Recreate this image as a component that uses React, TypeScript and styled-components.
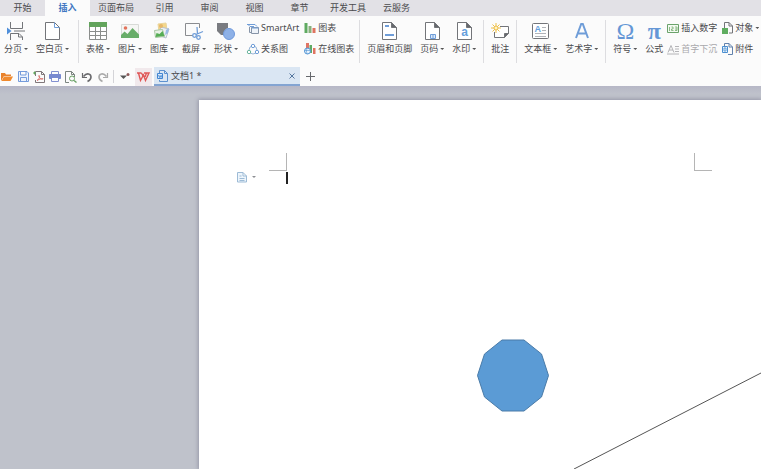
import React from "react";
import styled, { createGlobalStyle } from "styled-components";

const GlobalStyle = createGlobalStyle`
  *, *::before, *::after { box-sizing: border-box; }
  html, body, #root { height: 100%; margin: 0; }
  body {
    overflow: hidden;
    color: #4a4a4d;
    font-family: "Noto Sans", "Noto Sans CJK SC", sans-serif;
    font-size: 9px;
    line-height: 12px;
  }
  button {
    margin: 0;
    padding: 0;
    border: 0;
    background: none;
    color: inherit;
    font: inherit;
    white-space: nowrap;
    cursor: default;
  }
  svg { display: block; flex: none; overflow: visible; }
`;

const Window = styled.div`
  display: flex;
  flex-direction: column;
  min-height: 100vh;
  background: #bfc2cb;
`;

const MenuTabs = styled.nav`
  display: flex;
  height: 16px;
  background: #e2e1e6;
`;

const MenuTab = styled.button<{ $active?: boolean; $wide?: boolean }>`
  width: ${(p) => (p.$wide ? 52 : 45)}px;
  height: 16px;
  color: ${(p) => (p.$active ? "#3f77c2" : "#4a4a4d")};
  background: ${(p) => (p.$active ? "#fbfbfb" : "transparent")};
  font-weight: ${(p) => (p.$active ? 700 : 400)};
`;

const Ribbon = styled.div`
  display: flex;
  align-items: flex-start;
  height: 51px;
  padding-top: 4px;
  overflow: hidden;
  background: #fbfbfb;
`;

const Divider = styled.span<{ $tight?: boolean }>`
  flex: none;
  width: 1px;
  height: 43px;
  margin: 0 3px 0 ${(p) => (p.$tight ? 3 : 5)}px;
  background: #dddde0;
`;

const Tool = styled.button`
  display: flex;
  flex: none;
  flex-direction: column;
  align-items: center;
  gap: 1px;
  padding: 0 4px;
`;

const IconBox = styled.span`
  display: flex;
  align-items: center;
  justify-content: center;
  height: 22px;
`;

const Label = styled.span`
  display: flex;
  align-items: center;
  gap: 2px;
`;

const Caret = styled.span`
  width: 4px;
  height: 2px;
  background: #555;
  clip-path: polygon(0 0, 100% 0, 50% 100%);
`;

const SmallColumn = styled.div<{ $snug?: boolean }>`
  display: flex;
  flex: none;
  flex-direction: column;
  gap: 9px;
  margin-left: ${(p) => (p.$snug ? 0 : 5)}px;
  padding-top: 2px;
`;

const SmallTool = styled.button`
  display: flex;
  align-items: center;
  gap: 2px;
  height: 12px;
  &:disabled { color: #a9a9ac; }
`;

const DocumentBar = styled.div`
  display: flex;
  align-items: center;
  height: 19px;
  background: #fbfbfb;
`;

const QuickAccess = styled.div`
  display: flex;
  align-items: center;
  gap: 4px;
  padding: 0 4px 0 1px;
`;

const QuickButton = styled.button`
  display: flex;
  align-items: center;
  justify-content: center;
  width: 12px;
  height: 14px;
`;

const QuickDivider = styled.span`
  width: 1px;
  height: 13px;
  margin: 0 1px 0 0;
  background: #d4d4d8;
`;

const HomeButton = styled(QuickButton)`
  width: 17px;
  height: 18px;
  background: #f1e9ec;
`;

const DocumentTab = styled.div`
  display: flex;
  align-items: center;
  width: 146px;
  height: 19px;
  margin-left: 2px;
  padding: 0 2px 0 3px;
  border-bottom: 2px solid #83a4d2;
  background: #dae6f3;
`;

const DocumentName = styled.button`
  display: flex;
  flex: 1;
  align-items: center;
  gap: 3px;
`;

const AddButton = styled(QuickButton)`
  margin-left: 4px;
`;

const Workspace = styled.main`
  display: flex;
  flex: 1;
  padding: 14px 0 0 199px;
  background: linear-gradient(#b6b7c6, #bfc2cb 8px);
`;

const SheetShadow = styled.div`
  display: flex;
  flex: 1;
  box-shadow: 0 0 4px 1px #9698a8;
`;

const Sheet = styled.section`
  position: relative;
  flex: 1;
  overflow: hidden;
  background: #fff;
`;

const MarginCorner = styled.span<{ $side: "left" | "right" }>`
  position: absolute;
  top: 53px;
  left: ${(p) => (p.$side === "left" ? 70 : 495)}px;
  width: 18px;
  height: 18px;
  border: 0 solid #b5b5b5;
  border-bottom-width: 1px;
  border-left-width: ${(p) => (p.$side === "right" ? 1 : 0)}px;
  border-right-width: ${(p) => (p.$side === "left" ? 1 : 0)}px;
`;

const TextCursor = styled.span`
  position: absolute;
  top: 72px;
  left: 87px;
  width: 2px;
  height: 12px;
  background: #222;
`;

const ParagraphHandle = styled.button`
  position: absolute;
  top: 71px;
  left: 38px;
  display: flex;
  align-items: center;
  gap: 4px;
`;

const PaleCaret = styled(Caret)`
  background: #8d8f94;
`;

const CanvasShape = styled.svg<{ $x: number; $y: number }>`
  position: absolute;
  top: ${(p) => p.$y}px;
  left: ${(p) => p.$x}px;
`;

type IconProps = { w?: number; h?: number; children: React.ReactNode };
const Icon = ({ w = 18, h = 18, children }: IconProps) => (
  <svg width={w} height={h} viewBox={`0 0 ${w} ${h}`} fill="none" stroke="#737579" aria-hidden="true">
    {children}
  </svg>
);

const BLUE = "#6f9dd8";

const PageBreakIcon = () => (
  <Icon w={18} h={18}>
    <path d="M3.5 0v6.500h12V0M3.5 18v-6.500h8.500l3.500 3.500v3M11.500 11.500v3.500h4M7 9h11" />
    <path d="M0 5.500l4.500 3.500L0 12.500z" fill="#4f8fda" stroke="none" />
  </Icon>
);
const BlankPageIcon = () => (
  <Icon w={15}>
    <path d="M.5.5h9l5 5v12H.5z" fill="#fff" />
    <path d="M9.500.5v5h5" stroke={BLUE} />
  </Icon>
);
const TableIcon = () => (
  <Icon>
    <path d="M.5 5v12.500h17V5M.5 9.500h17M.5 13.500h17M6.500 5v12.500M11.500 5v12.500" fill="#fff" stroke="#8b8e8c" />
    <path d="M0 0h18v5H0z" fill="#63a45c" stroke="none" />
  </Icon>
);
const PictureIcon = () => (
  <Icon>
    <path d="M.5 2.500h17v13H.5z" fill="#f5f6f4" stroke="#d8dad7" />
    <circle cx="4.500" cy="6" r="1.800" fill="#e2735b" stroke="none" />
    <path d="M0 16v-3l3.500-3.500 3 2.500 5-6 6.500 6.500V16z" fill="#68ad69" stroke="none" />
  </Icon>
);
const GalleryIcon = () => (
  <Icon>
    <path d="M5 2l8-1 1 7-8 2z" fill="#f5d789" stroke="#ead59b" />
    <path d="M8 5l8 2-3 9-8-3z" fill="#edf0f3" stroke="#b9c3cf" />
    <circle cx="8" cy="4" r="2" fill="#e6b86b" stroke="none" />
    <path d="M1.500 8.500l8-1 2 7-9 1z" fill="#e9f2e7" stroke="#a9c7a4" />
    <path d="M2.500 15l1-4 3 1 3-3 2 5z" fill="#55ad54" stroke="none" />
    <path d="M13 8l3-2-1 5-3 2z" fill="#9cbce6" stroke="none" />
  </Icon>
);
const ScreenshotIcon = () => (
  <Icon w={19}>
    <path d="M8 13.500H.5v-12h14V6" stroke="#8a8c90" />
    <path d="M12 5l.5 7M18 9.500l-7 3" stroke={BLUE} strokeWidth="1.300" />
    <circle cx="9.500" cy="13.500" r="1.800" stroke={BLUE} strokeWidth="1.300" />
    <circle cx="13.500" cy="15.500" r="1.800" stroke={BLUE} strokeWidth="1.300" />
  </Icon>
);
const ShapesIcon = () => (
  <Icon>
    <path d="M0 1h11v5a6 6 0 0 0-4 7H4L0 9z" fill="#797b80" stroke="none" />
    <circle cx="12" cy="12" r="5.500" fill="#8eb1e7" stroke="#6f99dc" />
  </Icon>
);
const SmartArtIcon = () => (
  <Icon w={12} h={11}>
    <path d="M0 1.500h8l2 2M1 1.500l2 2h4" stroke={BLUE} />
    <path d="M2.500 4v5.500H4M4.500 4.500h7v6h-7z" fill="#eef3f9" stroke="#8795a8" />
    <path d="M4.500 5h7" stroke={BLUE} />
  </Icon>
);
const RelationIcon = () => (
  <Icon w={12} h={11}>
    <circle cx="6" cy="6" r="4" stroke="#9ab6d6" />
    <circle cx="6" cy="2" r="1.700" fill="#fff" stroke={BLUE} />
    <circle cx="2" cy="8" r="1.700" fill="#fff" stroke="#69b59d" />
    <circle cx="10" cy="8" r="1.700" fill="#fff" stroke={BLUE} />
  </Icon>
);
const ChartIcon = () => (
  <Icon w={12} h={11}>
    <path d="M.5 0h3v10h-3z" fill="#5faa61" stroke="none" />
    <path d="M4.500 3h3v7h-3z" fill="#88b07c" stroke="none" />
    <path d="M8.500 5h3v5h-3z" fill="#df7460" stroke="none" />
  </Icon>
);
const OnlineChartIcon = () => (
  <Icon w={12} h={12}>
    <path d="M2 0h3v6H2z" fill="#e07565" stroke="none" />
    <path d="M5.500 2h2.500v8H5.500z" fill="#5faa61" stroke="none" />
    <path d="M9 5h2.500v6H9z" fill="#df7460" stroke="none" />
    <circle cx="3.500" cy="8" r="3" fill="#e9f3fd" stroke="#4f93d4" />
    <path d="M1 7.500h5M3.500 5c-1.500 2-1.500 4 0 6" stroke="#4f93d4" strokeWidth=".6" />
  </Icon>
);
const FoldedPage = () => (
  <>
    <path d="M.5.5h9l5 5v12H.5z" fill="#fff" />
    <path d="M9.500.5v5h5z" fill="#66696e" />
  </>
);
const HeaderFooterIcon = () => (
  <Icon w={15}>
    <FoldedPage />
    <path d="M3 4h4M3 13h9" stroke={BLUE} strokeWidth="2" />
  </Icon>
);
const PageNumberIcon = () => (
  <Icon w={15}>
    <FoldedPage />
    <path d="M5.500 12.500h5v4h-5zM8 12.500v4" fill="#dceafb" stroke={BLUE} />
  </Icon>
);
const WatermarkIcon = () => (
  <Icon w={15}>
    <FoldedPage />
    <text x="7.500" y="14" textAnchor="middle" fontFamily="Liberation Sans" fontWeight="700" fontSize="12" fill="#659fdc" stroke="none">a</text>
  </Icon>
);
const CommentIcon = () => (
  <Icon w={18}>
    <path d="M9 4.500h8.500v7l-4 4H3.500V10" fill="#fff" />
    <path d="M13.500 15.500v-4h4z" fill="#66696e" />
    <path d="M5 1v10M0 6h10M1.500 2.500l7 7M8.500 2.500l-7 7" stroke="#eebf48" />
    <circle cx="5" cy="6" r="2" fill="#fff3c7" stroke="#eebf48" />
  </Icon>
);
const TextBoxIcon = () => (
  <Icon w={17} h={16}>
    <rect x=".5" y=".5" width="16" height="15" rx="1" fill="#fff" />
    <text x="2.500" y="9" fontFamily="Liberation Sans" fontWeight="700" fontSize="9" fill="#659fdc" stroke="none">A</text>
    <path d="M10 4.500h4M10 7.500h4M3 10.500h11M3 13.500h11" stroke="#b2b5ba" />
  </Icon>
);
const WordArtIcon = () => (
  <Icon w={14} h={16}>
    <path d="M1 15L6.200 1h1.600L13 15M3 10.500h8" stroke="#6f9dd8" strokeWidth="2" />
  </Icon>
);
const Glyph = styled.span`
  color: #6597d6;
  font-family: "Liberation Serif", serif;
  font-size: 24px;
  line-height: 22px;
`;
const BoldGlyph = styled(Glyph)`
  font-weight: 700;
`;
const DigitIcon = () => (
  <Icon w={12} h={9}>
    <path d="M.5.5h11v8H.5z" fill="#f3faf1" stroke="#6ba36b" />
    <path d="M2.500 3v4M4.500 3h1.500v2H4.500v1.500h2M8 3h2v3.500H8M8 5h2" stroke="#72aa6d" strokeWidth=".8" />
  </Icon>
);
const DropCapIcon = () => (
  <Icon w={12} h={11}>
    <path d="M1 8.500L4 1.500l3 7M2 6h4M8 2.500h4M8 5h4M8 7.500h4M0 10h12" stroke="#b4b4b7" />
  </Icon>
);
const ObjectIcon = () => (
  <Icon w={11} h={12}>
    <path d="M2.500 6V.5H7l3.500 3.500v7H7M7 .5V4h3.500" />
    <path d="M0 6h6v6H0z" fill="#5fad60" stroke="none" />
  </Icon>
);
const AttachmentIcon = () => (
  <Icon w={11} h={12}>
    <path d="M2.500 3V.5H7l3.500 3.500v7.500H6M7 .5V4h3.500" stroke="#6282ac" />
    <path d="M.5 3.500h5v6h-5z" fill="#eaf3fc" stroke="#4b8fd0" />
    <path d="M2 5h2v3H2z" stroke="#4b8fd0" strokeWidth=".8" />
  </Icon>
);
const WordDocIcon = () => (
  <Icon w={11} h={12}>
    <path d="M2.500 3V.5H7.500l3 3v8h-8V10M7.500.5v3h3" stroke="#5d91cf" />
    <path d="M.5 3.500h5v5h-5z" fill="#d9e9fa" stroke="#4386d2" />
    <path d="M1.500 5l1 2.500.7-2 .8 2 1-2.500" stroke="#4386d2" strokeWidth=".8" />
  </Icon>
);
const FolderIcon = () => (
  <Icon w={12} h={10}>
    <path d="M0 9V1h4l1 1.500h5V4H3z" fill="#e9822b" stroke="none" />
    <path d="M3 4.500h9L9.500 9H.5z" fill="#f08a2e" stroke="none" />
  </Icon>
);
const SaveIcon = () => (
  <Icon w={11} h={11}>
    <path d="M.5.5h8.500l1.500 1.500v8.500H.5zM2.500.5V4h5.500V.5M2.500 10.500V6.500h6v4" fill="#edf3fc" stroke="#759bdb" />
  </Icon>
);
const PdfIcon = () => (
  <Icon w={12} h={12}>
    <path d="M2.500 5V.5h6l3 3v8h-9V9M8.500.5v3h3" stroke="#80777a" />
    <path d="M0 2h3M1.500.5v3" stroke="#61a65d" />
    <path d="M4 9.500c3-2 3-5 2-5s1 4 3.500 3.500-3-.5-5.500 1.500" stroke="#d76862" strokeWidth=".9" />
  </Icon>
);
const PrinterIcon = () => (
  <Icon w={12} h={11}>
    <path d="M2.500 3V.5h7V3M2.500 8v2.500h7V8" stroke="#8290d0" />
    <path d="M.5 3.500h11v4H.5z" fill="#7789d0" stroke="#7789d0" />
    <path d="M3 7.500h6" stroke="#fff" />
  </Icon>
);
const PreviewIcon = () => (
  <Icon w={12} h={12}>
    <path d="M4 11.500H.5V.5h6l3 3V6M6.500.5v3h3" stroke="#7c8580" />
    <circle cx="7" cy="7.500" r="2.500" stroke="#6ba267" />
    <path d="M9 9.500l2.500 2" stroke="#6ba267" strokeWidth="1.400" />
  </Icon>
);
const UndoIcon = ({ redo = false }: { redo?: boolean }) => (
  <Icon w={10} h={10}>
    <g transform={redo ? "translate(10 0) scale(-1 1)" : undefined} stroke={redo ? "#aaa" : "#6a6a6d"}>
      <path d="M1.500 4.500C5 0 9 2 9 5c0 2-1.500 3.500-3.500 4.500" strokeWidth="1.600" />
      <path d="M.5 1v4.500H5" strokeWidth="1.200" />
    </g>
  </Icon>
);
const MoreIcon = () => (
  <Icon w={10} h={10}>
    <path d="M0 3.500h7L3.500 7z" fill="#555" stroke="none" />
    <circle cx="8" cy="2.500" r="1.500" fill="#8e5a5a" stroke="none" />
  </Icon>
);
const LogoIcon = () => (
  <Icon w={13} h={10}>
    <path d="M0 1h4.500M1.500 1l2 7.500L6.500 3l2 5.500L12 1H7M4.500 1l1.500 3M9.500 1L8 5" stroke="#df5555" strokeWidth="1.400" />
  </Icon>
);
const ParagraphIcon = () => (
  <Icon w={11} h={12}>
    <path d="M.5 1.500h5.500l3.500 3.500v6H.5zM6 1.500V5h3.500M2.500 5h2M2.500 7.500h5M2.500 9.500h5" fill="#edf5fc" stroke="#9dbbd6" />
  </Icon>
);

const menu = ["开始", "插入", "页面布局", "引用", "审阅", "视图", "章节", "开发工具", "云服务"];

type ToolProps = { label: string; icon: React.ReactNode; menu?: boolean };
const RibbonTool = ({ label, icon, menu: hasMenu }: ToolProps) => (
  <Tool type="button">
    <IconBox>{icon}</IconBox>
    <Label>
      {label}
      {hasMenu && <Caret />}
    </Label>
  </Tool>
);

export default function App() {
  return (
    <Window>
      <GlobalStyle />
      <MenuTabs>
        {menu.map((name) => (
          <MenuTab key={name} type="button" $active={name === "插入"} $wide={name.length === 4}>
            {name}
          </MenuTab>
        ))}
      </MenuTabs>

      <Ribbon>
        <RibbonTool label="分页" icon={<PageBreakIcon />} menu />
        <RibbonTool label="空白页" icon={<BlankPageIcon />} menu />
        <Divider />
        <RibbonTool label="表格" icon={<TableIcon />} menu />
        <RibbonTool label="图片" icon={<PictureIcon />} menu />
        <RibbonTool label="图库" icon={<GalleryIcon />} menu />
        <RibbonTool label="截屏" icon={<ScreenshotIcon />} menu />
        <RibbonTool label="形状" icon={<ShapesIcon />} menu />
        <SmallColumn>
          <SmallTool type="button"><SmartArtIcon />SmartArt</SmallTool>
          <SmallTool type="button"><RelationIcon />关系图</SmallTool>
        </SmallColumn>
        <SmallColumn>
          <SmallTool type="button"><ChartIcon />图表</SmallTool>
          <SmallTool type="button"><OnlineChartIcon />在线图表</SmallTool>
        </SmallColumn>
        <Divider />
        <RibbonTool label="页眉和页脚" icon={<HeaderFooterIcon />} />
        <RibbonTool label="页码" icon={<PageNumberIcon />} menu />
        <RibbonTool label="水印" icon={<WatermarkIcon />} menu />
        <Divider $tight />
        <RibbonTool label="批注" icon={<CommentIcon />} />
        <Divider $tight />
        <RibbonTool label="文本框" icon={<TextBoxIcon />} menu />
        <RibbonTool label="艺术字" icon={<WordArtIcon />} menu />
        <Divider $tight />
        <RibbonTool label="符号" icon={<Glyph>Ω</Glyph>} menu />
        <RibbonTool label="公式" icon={<BoldGlyph>π</BoldGlyph>} />
        <SmallColumn $snug>
          <SmallTool type="button"><DigitIcon />插入数字</SmallTool>
          <SmallTool type="button" disabled><DropCapIcon />首字下沉</SmallTool>
        </SmallColumn>
        <SmallColumn>
          <SmallTool type="button"><ObjectIcon />对象<Caret /></SmallTool>
          <SmallTool type="button"><AttachmentIcon />附件</SmallTool>
        </SmallColumn>
      </Ribbon>

      <DocumentBar>
        <QuickAccess>
          <QuickButton type="button" aria-label="打开"><FolderIcon /></QuickButton>
          <QuickButton type="button" aria-label="保存"><SaveIcon /></QuickButton>
          <QuickButton type="button" aria-label="输出为PDF"><PdfIcon /></QuickButton>
          <QuickButton type="button" aria-label="打印"><PrinterIcon /></QuickButton>
          <QuickButton type="button" aria-label="打印预览"><PreviewIcon /></QuickButton>
          <QuickButton type="button" aria-label="撤销"><UndoIcon /></QuickButton>
          <QuickButton type="button" aria-label="恢复"><UndoIcon redo /></QuickButton>
          <QuickDivider />
          <QuickButton type="button" aria-label="更多"><MoreIcon /></QuickButton>
        </QuickAccess>
        <HomeButton type="button" aria-label="首页"><LogoIcon /></HomeButton>
        <DocumentTab>
          <DocumentName type="button"><WordDocIcon />文档1 *</DocumentName>
          <QuickButton type="button" aria-label="关闭">
            <Icon w={6} h={6}><path d="M.5.5l5 5M5.500.5l-5 5" stroke="#55779f" /></Icon>
          </QuickButton>
        </DocumentTab>
        <AddButton type="button" aria-label="新建">
          <Icon w={9} h={9}><path d="M4.500 0v9M0 4.500h9" stroke="#66686c" /></Icon>
        </AddButton>
      </DocumentBar>

      <Workspace>
        <SheetShadow>
          <Sheet>
            <MarginCorner $side="left" />
            <MarginCorner $side="right" />
            <TextCursor />
            <ParagraphHandle type="button" aria-label="段落布局"><ParagraphIcon /><PaleCaret /></ParagraphHandle>
            <CanvasShape $x={278} $y={239} width="72" height="73" viewBox="0 0 72 73">
              <path
                d="M.5 36.500L7.500 15 25 1h22l17.500 14 7 21.500-7 21.500L47 72H25L7.500 58z"
                fill="#5b9bd5"
                stroke="#4a7ba8"
              />
            </CanvasShape>
            <CanvasShape $x={375} $y={273} width="187" height="96" viewBox="0 0 187 96">
              <path d="M0 96L187 0" stroke="#555" />
            </CanvasShape>
          </Sheet>
        </SheetShadow>
      </Workspace>
    </Window>
  );
}
